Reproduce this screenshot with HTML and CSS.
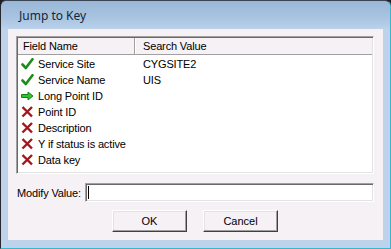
FILE: index.html
```html
<!DOCTYPE html>
<html lang="en">
<head>
    <meta charset="UTF-8">
    <title>Jump to Key</title>
    <link rel="stylesheet" href="styles.css">
</head>
<body>
    <div class="window">
        <div class="titlebar">Jump to Key</div>
        <div class="client">
            <div class="listbox">
                <div class="list-header">
                    <div class="col-field">Field Name</div>
                    <div class="col-value">Search Value</div>
                </div>
                <div class="list-body">
                    <div class="row">
                        <div class="col-field">
                            <svg class="icon" viewBox="0 0 13 12"><path d="M1.5 6.5 L4.8 10 L11.5 1.2" fill="none" stroke="#1d8c1d" stroke-width="2.6" stroke-linecap="round" stroke-linejoin="round"/></svg>
                            Service Site
                        </div>
                        <div class="col-value">CYGSITE2</div>
                    </div>
                    <div class="row">
                        <div class="col-field">
                            <svg class="icon" viewBox="0 0 13 12"><path d="M1.5 6.5 L4.8 10 L11.5 1.2" fill="none" stroke="#1d8c1d" stroke-width="2.6" stroke-linecap="round" stroke-linejoin="round"/></svg>
                            Service Name
                        </div>
                        <div class="col-value">UIS</div>
                    </div>
                    <div class="row">
                        <div class="col-field">
                            <svg class="icon" viewBox="0 0 13 12"><path d="M0.5 4.5 H7 V2 L12 6 L7 10 V7.5 H0.5 Z" fill="#2fc42f" stroke="#1b7f1b" stroke-width="1"/></svg>
                            Long Point ID
                        </div>
                        <div class="col-value"></div>
                    </div>
                    <div class="row">
                        <div class="col-field">
                            <svg class="icon" viewBox="0 0 13 12"><path d="M1.5 1 L11 10.5 M11 1 L1.5 10.5" fill="none" stroke="#a3161a" stroke-width="2.4"/></svg>
                            Point ID
                        </div>
                        <div class="col-value"></div>
                    </div>
                    <div class="row">
                        <div class="col-field">
                            <svg class="icon" viewBox="0 0 13 12"><path d="M1.5 1 L11 10.5 M11 1 L1.5 10.5" fill="none" stroke="#a3161a" stroke-width="2.4"/></svg>
                            Description
                        </div>
                        <div class="col-value"></div>
                    </div>
                    <div class="row">
                        <div class="col-field">
                            <svg class="icon" viewBox="0 0 13 12"><path d="M1.5 1 L11 10.5 M11 1 L1.5 10.5" fill="none" stroke="#a3161a" stroke-width="2.4"/></svg>
                            Y if status is active
                        </div>
                        <div class="col-value"></div>
                    </div>
                    <div class="row">
                        <div class="col-field">
                            <svg class="icon" viewBox="0 0 13 12"><path d="M1.5 1 L11 10.5 M11 1 L1.5 10.5" fill="none" stroke="#a3161a" stroke-width="2.4"/></svg>
                            Data key
                        </div>
                        <div class="col-value"></div>
                    </div>
                </div>
            </div>

            <div class="modify-row">
                <label class="modify-label">Modify Value:</label>
                <div class="textbox"><span class="caret"></span></div>
            </div>

            <div class="buttons">
                <button class="btn">OK</button>
                <button class="btn">Cancel</button>
            </div>
        </div>
    </div>
</body>
</html>
```

FILE: styles.css
```css
body {
    margin: 0;
    background-color: #1b1f24;
    font-family: "Liberation Sans", Arial, sans-serif;
    font-size: 11px;
    letter-spacing: -0.15px;
    color: #000;
}
.window {
    width: 391px;
    height: 249px;
    box-sizing: border-box;
    display: flex;
    flex-direction: column;
    padding: 0 7px 8px 7px;
    border-left: 1px solid #26282c;
    border-top: 1px solid #3a4654;
    border-right: 1px solid #34b8cc;
    border-bottom: 1px solid #34b8cc;
    border-radius: 6px 6px 0 0;
    background: linear-gradient(to bottom, #9ab7d7 0px, #aac5e2 18px, #bcd3eb 29px, #bcd3eb 100%);
}
.titlebar {
    height: 29px;
    padding-left: 11px;
    box-sizing: border-box;
    display: flex;
    align-items: center;
    font-family: "Noto Sans", "Open Sans", sans-serif;
    font-size: 12px;
    letter-spacing: 0;
    color: #15253a;
}
.client {
    flex: 1;
    background-color: #f5f1f5;
    padding: 7px 9px 8px 8px;
    display: flex;
    flex-direction: column;
}
.listbox {
    height: 138px;
    box-sizing: border-box;
    border-top: 1px solid #a0a0a0;
    border-left: 1px solid #a0a0a0;
    border-right: 1px solid #ffffff;
    border-bottom: 1px solid #ffffff;
    box-shadow: inset 1px 1px 0 #696969, inset -1px -1px 0 #e3e3e3;
    padding: 1px;
    background-color: #fff;
    display: flex;
    flex-direction: column;
}
.list-header {
    display: flex;
    height: 17px;
    box-sizing: border-box;
    background-color: #f5f1f5;
    border-bottom: 1px solid #a0a0a0;
}
.list-header .col-field {
    width: 111px;
    padding-left: 5px;
    border-right: 1px solid #a0a0a0;
    box-shadow: 1px 0 0 #fff;
}
.list-header .col-value {
    flex: 1;
    padding-left: 8px;
}
.list-header div {
    display: flex;
    align-items: center;
}
.list-body {
    flex: 1;
    padding-top: 1px;
}
.row {
    display: flex;
    height: 16px;
    align-items: center;
}
.row .col-field {
    width: 122px;
    display: flex;
    align-items: center;
    padding-left: 3px;
}
.row .col-value {
    flex: 1;
}
.icon {
    width: 13px;
    height: 12px;
    margin-right: 4px;
    flex: none;
}
.modify-row {
    display: flex;
    align-items: center;
    margin-top: 9px;
}
.modify-label {
    width: 68px;
    padding-left: 1px;
}
.textbox {
    flex: 1;
    height: 19px;
    box-sizing: border-box;
    background-color: #fff;
    border-top: 1px solid #a0a0a0;
    border-left: 1px solid #a0a0a0;
    border-right: 1px solid #ffffff;
    border-bottom: 1px solid #ffffff;
    box-shadow: inset 1px 1px 0 #696969, inset -1px -1px 0 #e3e3e3;
    display: flex;
    align-items: center;
    padding-left: 2px;
}
.caret {
    width: 1px;
    height: 13px;
    background-color: #000;
}
.buttons {
    display: flex;
    justify-content: center;
    gap: 16px;
    margin-top: 8px;
}
.btn {
    width: 75px;
    height: 22px;
    font-family: "Liberation Sans", Arial, sans-serif;
    font-size: 11px;
    color: #000;
    background-color: #f5f1f5;
    border-top: 1px solid #ffffff;
    border-left: 1px solid #ffffff;
    border-right: 1px solid #404040;
    border-bottom: 1px solid #404040;
    box-shadow: inset -1px -1px 0 #a0a0a0, inset 1px 1px 0 #e3e3e3;
    padding: 0;
}
```
